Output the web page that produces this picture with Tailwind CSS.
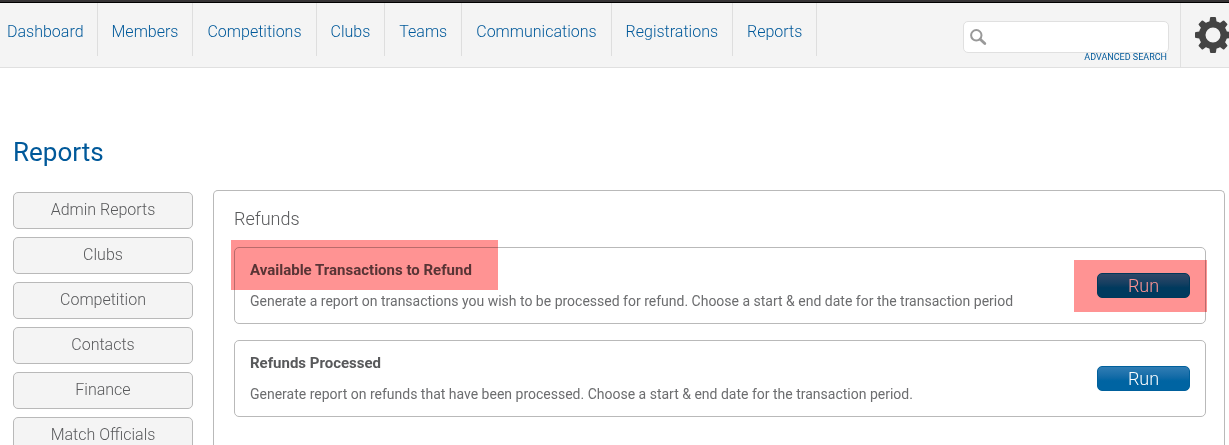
<!DOCTYPE html>
<html lang="en">
<head>
  <meta charset="UTF-8" />
  <meta name="viewport" content="width=device-width, initial-scale=1.0"/>
  <title>Reports</title>
  <script src="https://cdn.jsdelivr.net/npm/@tailwindcss/browser@4"></script>
</head>
<body class="h-screen overflow-hidden flex flex-col bg-white font-[Roboto,sans-serif] text-[#58595b]">

  <!-- Top navigation -->
  <header class="shrink-0 flex justify-between h-[68px] pt-px bg-[#f4f4f4] border-t-2 border-b border-t-[#363435] border-b-[#e0e0e0] shadow-[inset_0_1px_0_#000]">
    <nav class="flex h-[53px] text-base leading-[58px] font-light text-[#00599a]">
      <a href="#" class="pl-[7px] pr-[13px] border-r border-[#dedede]">Dashboard</a>
      <a href="#" class="px-[14px] border-r border-[#dedede]">Members</a>
      <a href="#" class="px-[14px] border-r border-[#dedede]">Competitions</a>
      <a href="#" class="px-[14px] border-r border-[#dedede]">Clubs</a>
      <a href="#" class="px-[14px] border-r border-[#dedede]">Teams</a>
      <a href="#" class="px-[14px] border-r border-[#dedede]">Communications</a>
      <a href="#" class="px-[14px] border-r border-[#dedede]">Registrations</a>
      <a href="#" class="px-[14px] border-r border-[#dedede]">Reports</a>
    </nav>

    <div class="flex">
      <div class="flex flex-col items-end pt-[18px] pr-[11px]">
        <label class="flex items-center w-[206px] h-8 pl-[6px] rounded-[5px] border border-[#e0e0e0] bg-white" aria-label="Search">
          <svg class="size-[17px] shrink-0" viewBox="0 0 17 17" fill="none" stroke="#999" aria-hidden="true">
            <circle cx="6.3" cy="6.3" r="5.2" stroke-width="2"/>
            <path d="M10.2 10.2 14.8 14.6" stroke-width="2.8" stroke-linecap="round"/>
          </svg>
          <input type="text" aria-label="Search" class="min-w-0 flex-1 px-2 text-sm outline-none" />
        </label>
        <a href="#" class="pr-[2px] text-[9px] leading-[9px] text-[#00599a]">ADVANCED SEARCH</a>
      </div>
      <div class="w-[49px] border-l border-[#e0e0e0] overflow-hidden">
        <button type="button" aria-label="Settings" class="block ml-[14px] mt-[14px] size-9">
          <svg class="size-9" viewBox="-18 -18 36 36" aria-hidden="true">
            <g fill="#444">
              <path id="tooth" d="M-3 -17Q-3 -18 -2 -18H2Q3 -18 3 -17L4 -10H-4Z"/>
              <use href="#tooth" transform="rotate(45)"/>
              <use href="#tooth" transform="rotate(90)"/>
              <use href="#tooth" transform="rotate(135)"/>
              <use href="#tooth" transform="rotate(180)"/>
              <use href="#tooth" transform="rotate(225)"/>
              <use href="#tooth" transform="rotate(270)"/>
              <use href="#tooth" transform="rotate(315)"/>
            </g>
            <circle r="10.8" fill="none" stroke="#444" stroke-width="6.6"/>
          </svg>
        </button>
      </div>
    </div>
  </header>

  <main class="flex-1 min-h-0 flex flex-col pl-[13px] pr-1 pt-[66px]">
    <h1 class="text-[26px] leading-9 text-[#00599a]">Reports</h1>

    <div class="flex-1 min-h-0 flex gap-5 pt-5">
      <!-- Report categories -->
      <aside class="w-[180px] shrink-0 flex flex-col gap-2 pt-[2px] text-base font-light">
        <button type="button" class="shrink-0 h-[37px] pb-px rounded-[5px] border border-[#b9b9b9] bg-[#f4f4f4]">Admin Reports</button>
        <button type="button" class="shrink-0 h-[37px] pb-px rounded-[5px] border border-[#b9b9b9] bg-[#f4f4f4]">Clubs</button>
        <button type="button" class="shrink-0 h-[37px] pb-px rounded-[5px] border border-[#b9b9b9] bg-[#f4f4f4]">Competition</button>
        <button type="button" class="shrink-0 h-[37px] pb-px rounded-[5px] border border-[#b9b9b9] bg-[#f4f4f4]">Contacts</button>
        <button type="button" class="shrink-0 h-[37px] pb-px rounded-[5px] border border-[#b9b9b9] bg-[#f4f4f4]">Finance</button>
        <button type="button" class="shrink-0 h-[37px] pb-px rounded-[5px] border border-[#b9b9b9] bg-[#f4f4f4]">Match Officials</button>
      </aside>

      <section class="flex-1 min-w-0 px-5 pr-[18px] pt-4 rounded-t-[5px] border border-b-0 border-[#b9b9b9]">
        <h2 class="text-lg leading-6 font-light">Refunds</h2>

        <div class="relative flex items-center justify-between h-[77px] mt-4 px-[15px] rounded-[5px] border border-[#b9b9b9]">
          <div>
            <h3 class="text-[15px] leading-5 font-bold">Available Transactions to Refund</h3>
            <p class="mt-[11px] text-sm leading-5 text-[#6c6d6f]">Generate a report on transactions you wish to be processed for refund. Choose a start &amp; end date for the transaction period</p>
          </div>
          <button type="button" class="w-[93px] h-[25px] rounded-[5px] bg-linear-to-b from-[#2f7db4] to-[#0064a2] to-60% border border-[#00609c] text-lg leading-[22px] font-light text-white">Run</button>
          <!-- Highlights -->
          <span class="absolute -left-1 -top-2 w-[267px] h-[50px] bg-[#ff9393] mix-blend-multiply pointer-events-none"></span>
          <span class="absolute -right-[2px] top-3 w-[133px] h-[52px] bg-[#ff9393] mix-blend-multiply pointer-events-none"></span>
        </div>

        <div class="flex items-center justify-between h-[77px] mt-4 px-[15px] rounded-[5px] border border-[#b9b9b9]">
          <div>
            <h3 class="text-[15px] leading-5 font-bold">Refunds Processed</h3>
            <p class="mt-[11px] text-sm leading-5 text-[#6c6d6f]">Generate report on refunds that have been processed. Choose a start &amp; end date for the transaction period.</p>
          </div>
          <button type="button" class="w-[93px] h-[25px] rounded-[5px] bg-linear-to-b from-[#2f7db4] to-[#0064a2] to-60% border border-[#00609c] text-lg leading-[22px] font-light text-white">Run</button>
        </div>
      </section>
    </div>
  </main>
</body>
</html>
